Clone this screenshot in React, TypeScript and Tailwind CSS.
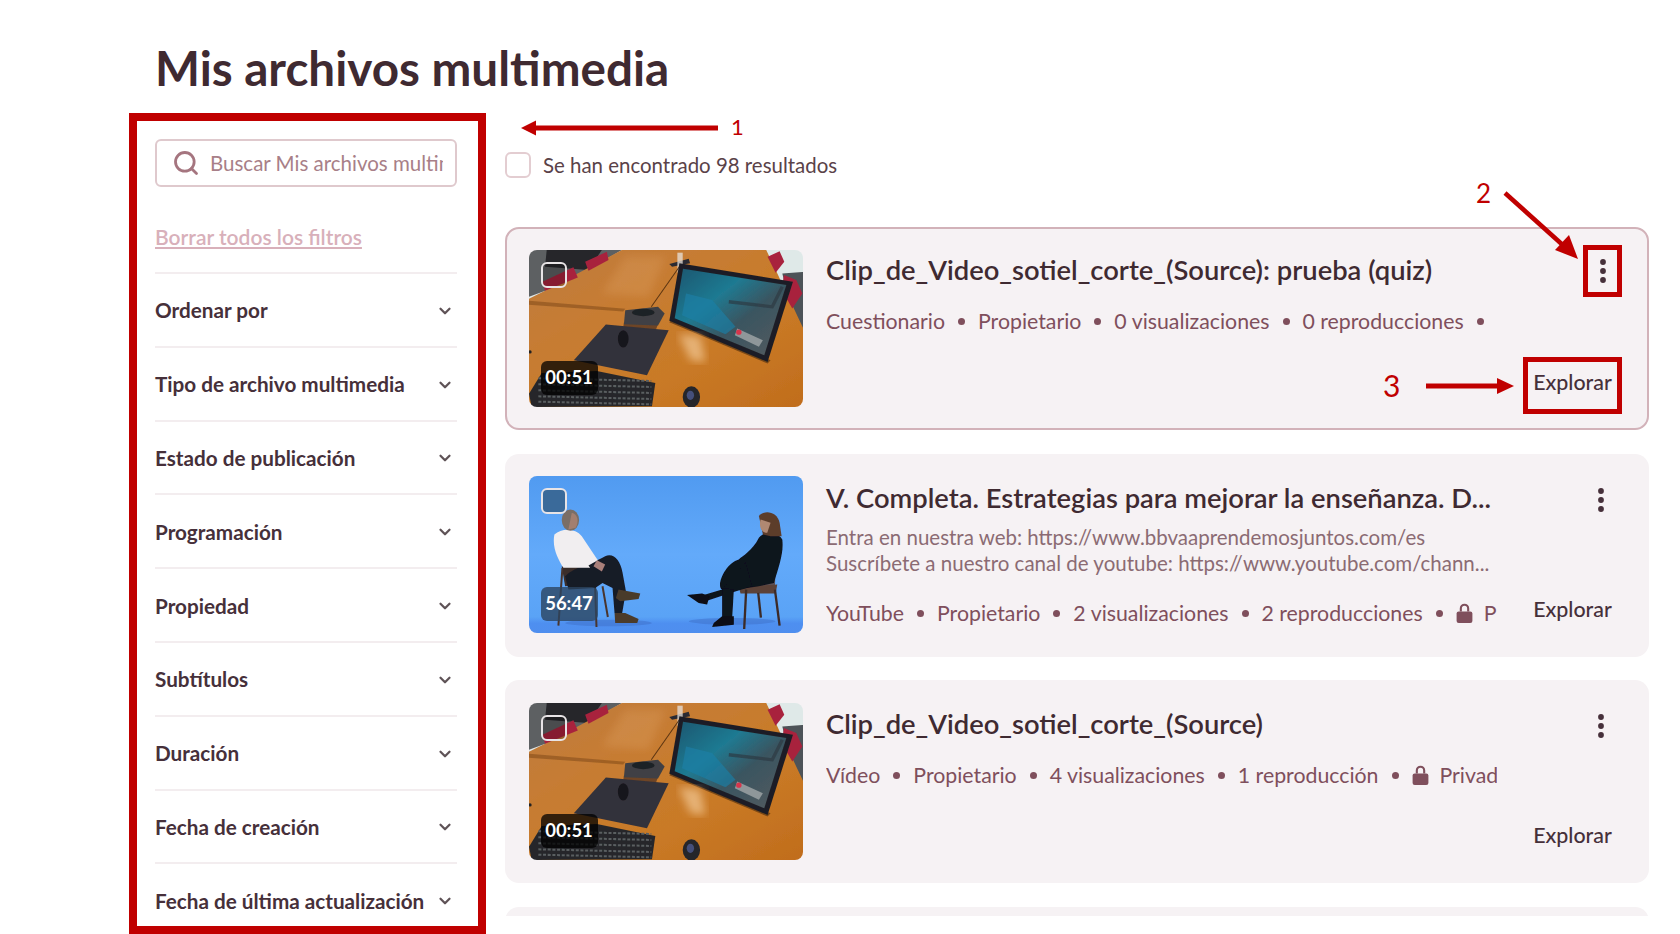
import { ChevronDown, Search } from 'lucide-react';

const filters = [
  'Ordenar por',
  'Tipo de archivo multimedia',
  'Estado de publicación',
  'Programación',
  'Propiedad',
  'Subtítulos',
  'Duración',
  'Fecha de creación',
  'Fecha de última actualización',
];

function OfficeScene() {
  return (
    <svg viewBox="12 10 820 470" preserveAspectRatio="none" className="h-full w-full">
      <defs>
        <linearGradient id="table" x1="0" y1="0" x2="1" y2="1">
          <stop offset="0" stopColor="#bd7a3e" />
          <stop offset="0.3" stopColor="#c67c34" />
          <stop offset="0.65" stopColor="#c97a26" />
          <stop offset="1" stopColor="#c06c1c" />
        </linearGradient>
        <linearGradient id="screen" x1="0" y1="0" x2="1" y2="1">
          <stop offset="0" stopColor="#1c566f" />
          <stop offset="0.35" stopColor="#1f7a92" />
          <stop offset="0.6" stopColor="#3a5560" />
          <stop offset="1" stopColor="#555b5f" />
        </linearGradient>
        <filter id="soft">
          <feGaussianBlur stdDeviation="2.2" />
        </filter>
        <filter id="glow">
          <feGaussianBlur stdDeviation="12" />
        </filter>
      </defs>
      <g filter="url(#soft)">
        <rect x="0" y="0" width="840" height="490" fill="#dfe6e4" />
        <polygon points="12,10 290,10 120,110 12,150" fill="#5d6062" />
        <polygon points="65,10 230,10 190,70 60,60" fill="#26262b" />
        <polygon points="700,10 840,10 840,250" fill="#dfe9e8" />
        <polygon points="770,80 840,75 840,260 800,200" fill="#4d5358" />
        <polygon points="290,10 722,10 840,260 840,490 0,490 0,162 60,132" fill="url(#table)" />
        <polygon points="12,162 300,186 294,194 12,174" fill="#7a4616" opacity="0.5" />
        <polygon points="300,30 420,30 370,150 230,140" fill="#e0a468" opacity="0.3" filter="url(#glow)" />
        <polygon points="180,45 245,15 250,40 190,72" fill="#a8233e" />
        <polygon points="52,105 145,62 158,92 60,132" fill="#a8233e" />
        <polygon points="726,30 762,14 776,45 750,78" fill="#a8233e" />
        <polygon points="775,85 812,100 830,140 800,185 768,130" fill="#a8233e" />
        <polygon points="432,52 490,36 494,50 440,60" fill="#2b2b30" />
        <rect x="456" y="18" width="16" height="60" fill="#e7e2dc" opacity="0.75" />
        <line x1="462" y1="60" x2="378" y2="180" stroke="#5a3413" strokeWidth="3" />
        <polygon points="432,226 726,350 735,340 440,218" fill="#5a3413" opacity="0.7" />
        <polygon points="462,50 802,105 726,345 432,222" fill="#1f1f25" />
        <polygon points="473,66 782,115 716,325 448,214" fill="url(#screen)" />
        <polygon points="482,140 560,160 630,240 600,262 470,205" fill="#1a7fa8" opacity="0.65" />
        <polyline points="610,165 740,180 770,120" fill="none" stroke="#2c3a44" strokeWidth="10" opacity="0.7" />
        <polygon points="635,245 712,280 700,300 628,265" fill="#8f979a" />
        <circle cx="640" cy="256" r="8" fill="#d8344c" />
        <polygon points="460,262 525,268 540,345 495,340" fill="#f0c48f" opacity="0.75" filter="url(#glow)" />
        <polygon points="296,228 398,232 392,248 294,242" fill="#6e4526" />
        <polygon points="300,190 398,180 418,200 398,236 296,232" fill="#404144" />
        <ellipse cx="354" cy="197" rx="34" ry="11" fill="#1f2126" />
        <polygon points="242,233 430,250 365,385 146,340" fill="#33313a" />
        <ellipse cx="294" cy="276" rx="16" ry="26" fill="#17171c" />
        <polygon points="50,378 215,372 390,408 380,478 20,480 12,440" fill="#26282b" />
        {[392, 410, 428, 446, 462].map((y) => (
          <line key={y} x1="40" y1={y + 2} x2="378" y2={y + 10} stroke="#5a5e61" strokeWidth="6" strokeDasharray="9 5" />
        ))}
        <ellipse cx="498" cy="450" rx="26" ry="32" fill="#25262c" />
        <ellipse cx="495" cy="445" rx="11" ry="14" fill="#45507a" />
        <circle cx="15" cy="315" r="5" fill="#222" />
      </g>
    </svg>
  );
}

function InterviewScene() {
  return (
    <svg viewBox="12 10 820 470" preserveAspectRatio="none" className="h-full w-full">
      <defs>
        <linearGradient id="wall" x1="0" y1="0" x2="0" y2="1">
          <stop offset="0" stopColor="#509af0" />
          <stop offset="0.5" stopColor="#63aafa" />
          <stop offset="0.88" stopColor="#5aa3f6" />
          <stop offset="0.92" stopColor="#4e8ff0" />
          <stop offset="1" stopColor="#4f8eee" />
        </linearGradient>
        <filter id="soft2">
          <feGaussianBlur stdDeviation="1.6" />
        </filter>
      </defs>
      <rect x="0" y="0" width="840" height="490" fill="url(#wall)" />
      <g filter="url(#soft2)">
        <ellipse cx="250" cy="450" rx="130" ry="10" fill="#3f74cf" opacity="0.6" />
        <ellipse cx="620" cy="445" rx="130" ry="10" fill="#3f74cf" opacity="0.6" />

        {/* man */}
        <path d="M110 280 L205 280 L215 300 L215 330 L120 340 Z" fill="#3a2d2a" />
        <path d="M112 285 L100 458 M208 290 L214 462 M232 340 L248 432" stroke="#4a362e" strokeWidth="6" fill="none" />
        <path d="M120 310 C150 280 210 270 240 250 C265 240 285 260 292 300 L302 355 L290 425 L268 420 L262 345 L232 330 L210 345 L130 350 Z" fill="#181a26" />
        <path d="M280 350 L345 362 L340 378 L285 385 L272 375 Z" fill="#4a3a2c" />
        <path d="M268 420 L300 420 L340 438 L336 450 L270 450 Z" fill="#4b3b2c" />
        <path d="M88 185 C110 165 150 165 170 190 L218 262 L190 278 L195 285 L115 285 C100 260 80 225 88 185 Z" fill="#f1eef0" />
        <path d="M215 262 L240 275 L230 296 L205 280 Z" fill="#a9807a" />
        <ellipse cx="136" cy="142" rx="26" ry="32" fill="#7a6e66" />
        <path d="M140 120 C158 125 162 145 152 165 L130 170 Z" fill="#a37f70" />

        {/* woman */}
        <path d="M640 342 L755 335 L750 362 L645 362 Z" fill="#5c4338" />
        <path d="M670 290 L750 282 L748 340 L668 345 Z" fill="#5c4338" opacity="0.85" />
        <path d="M662 350 L656 468 M748 350 L762 458 M698 360 L706 434" stroke="#3c2c28" strokeWidth="7" fill="none" />
        <path d="M640 260 C650 250 680 235 700 195 C715 175 750 170 770 200 C775 240 760 280 745 330 L700 340 L620 352 L590 350 C570 340 600 270 640 260 Z" fill="#10121c" />
        <path d="M660 270 L590 350 L530 368 L540 385 L610 362 L680 340 Z" fill="#10121c" />
        <path d="M590 345 L625 350 L620 435 L590 435 Z" fill="#10121c" />
        <path d="M485 366 L530 362 L552 370 L545 395 L520 390 Z" fill="#0b0b12" />
        <path d="M590 430 L625 430 L625 455 L560 462 L565 450 Z" fill="#0b0b12" />
        <path d="M700 130 C715 110 755 115 762 150 L768 190 L735 190 L712 185 Z" fill="#5c3c2c" />
        <path d="M705 140 C700 160 705 180 725 180 L735 150 Z" fill="#b08872" />
      </g>
    </svg>
  );
}

function LockIcon() {
  return (
    <svg viewBox="0 0 16 19" className="h-[20px] w-[17px] shrink-0" fill="#7f4f5c">
      <path d="M3.5 8V5.2a4.5 4.5 0 0 1 9 0V8h-2V5.2a2.5 2.5 0 0 0-5 0V8z" />
      <rect x="0.5" y="8" width="15" height="11" rx="2" />
    </svg>
  );
}

function MoreDots() {
  return (
    <svg viewBox="0 0 6 24" className="h-[24px] w-[6px]" fill="#46303a">
      <circle cx="3" cy="3" r="2.9" />
      <circle cx="3" cy="12" r="2.9" />
      <circle cx="3" cy="21" r="2.9" />
    </svg>
  );
}

type MediaCardProps = {
  title: string;
  duration: string;
  scene: 'office' | 'interview';
  description?: string[];
  meta: string[];
  lockLabel?: string;
  highlighted?: boolean;
};

function MediaCard({ title, duration, scene, description, meta, lockLabel, highlighted }: MediaCardProps) {
  return (
    <article
      className={`flex h-[203px] shrink-0 rounded-[14px] border-2 bg-[#f6f2f4] pl-[21.5px] pr-[25px] ${
        highlighted ? 'border-[#d2b2b9]' : 'border-transparent'
      }`}
    >
      <div className="relative mt-[20.5px] h-[157px] w-[274px] shrink-0 overflow-hidden rounded-[8px]">
        {scene === 'office' ? <OfficeScene /> : <InterviewScene />}
        <span className={`absolute left-[12px] top-[12px] h-[26px] w-[26px] rounded-[6px] border-2 border-[#e8e4e6] ${scene === 'office' ? 'bg-black/20' : 'bg-[#3a6a9a]'}`} />
        <span className={`absolute bottom-[12px] left-[12px] flex h-[34px] w-[57px] items-center justify-center rounded-[6px] text-[18.5px] font-bold text-white ${scene === 'office' ? 'bg-black/75' : 'bg-[#2c4560]/80'}`}>
          {duration}
        </span>
      </div>
      <div className="ml-[23.5px] flex min-w-0 flex-1 flex-col pr-[26px]">
        <h2 className={`whitespace-nowrap text-[27.35px] font-semibold leading-[36px] text-[#3f2a31] ${highlighted ? 'mt-[23px]' : 'mt-[24px]'}`}>{title}</h2>
        {description ? (
          <div className="mt-[8px] text-[20.5px] leading-[26px] text-[#8b6b73]">
            {description.map((line) => (
              <p key={line} className="whitespace-nowrap">{line}</p>
            ))}
          </div>
        ) : null}
        <div className={`flex items-center gap-[13px] overflow-hidden whitespace-nowrap text-[21.3px] leading-[28px] text-[#7f4f5c] ${description ? 'mt-[23.5px]' : 'mt-[19px]'}`}>
          {meta.map((item) => (
            <span key={item} className="contents">
              <span className="shrink-0">{item}</span>
              <span className="h-[7px] w-[7px] shrink-0 rounded-full bg-[#7f4f5c]" />
            </span>
          ))}
          {lockLabel ? (
            <span className="flex shrink-0 items-center gap-[11px]">
              <LockIcon />
              {lockLabel}
            </span>
          ) : null}
        </div>
      </div>
      <div className="flex w-[99px] shrink-0 flex-col items-end justify-between pb-[14px] pt-[16px]">
        <button
          className={`flex h-[52px] w-[39px] items-center justify-center ${
            highlighted ? 'border-[5px] border-[#c00000]' : 'mr-[2px] mt-[2px]'
          }`}
        >
          <MoreDots />
        </button>
        <button
          className={`flex h-[57px] w-[99px] items-center justify-center pb-[6px] text-[21.4px] font-medium text-[#46303a] ${
            highlighted ? 'border-[5px] border-[#c00000]' : ''
          }`}
        >
          Explorar
        </button>
      </div>
    </article>
  );
}

export default function App() {
  return (
    <div className="relative h-[934px] w-[1680px] overflow-hidden bg-white pl-[129px] font-['Lato',sans-serif]">
      <h1 className="flex h-[113px] items-center pl-[26px] pt-[22px] text-[47.6px] font-bold leading-none text-[#3f2a31]">
        Mis archivos multimedia
      </h1>
      <div className="flex items-start gap-[19px]">
        <aside className="h-[821px] w-[357px] shrink-0 overflow-hidden border-[8px] border-[#c00000] pl-[18px] pr-[21px] pt-[18px]">
          <div className="flex h-[48px] items-center gap-[10px] overflow-hidden rounded-[6px] border-2 border-[#dfc9cd] pl-[15px] pr-[12px]">
            <Search className="h-[28px] w-[28px] shrink-0 text-[#a5757f]" strokeWidth={2.4} />
            <span className="overflow-hidden whitespace-nowrap text-[20.5px] text-[#a87f88]">Buscar Mis archivos multimedia</span>
          </div>
          <a className="mt-[36px] block text-[21px] font-semibold leading-[28px] text-[#d8b0ba] underline">Borrar todos los filtros</a>
          <div className="mt-[21px]">
            {filters.map((label) => (
              <div key={label} className="flex h-[73.8px] items-center justify-between border-t-2 border-[#f3edef] pr-[3px] pt-[2px] text-[20.7px] font-bold text-[#46303a]">
                <span className="whitespace-nowrap">{label}</span>
                <ChevronDown className="h-[18px] w-[18px] shrink-0 text-[#5f5357]" strokeWidth={3} />
              </div>
            ))}
          </div>
        </aside>
        <main className="h-[803px] w-[1144px] overflow-hidden">
          <div className="flex h-[114px] items-start pt-[38px]">
            <span className="mt-[1px] h-[26px] w-[26px] shrink-0 rounded-[6px] border-2 border-[#e3cdd1] bg-white" />
            <span className="ml-[12px] text-[20.45px] leading-[28px] text-[#5a4248]">Se han encontrado 98 resultados</span>
          </div>
          <div className="flex flex-col gap-[23.5px]">
            <MediaCard
              highlighted
              scene="office"
              duration="00:51"
              title="Clip_de_Video_sotiel_corte_(Source): prueba (quiz)"
              meta={['Cuestionario', 'Propietario', '0 visualizaciones', '0 reproducciones']}
            />
            <MediaCard
              scene="interview"
              duration="56:47"
              title="V. Completa. Estrategias para mejorar la enseñanza. D..."
              description={[
                'Entra en nuestra web: https://www.bbvaaprendemosjuntos.com/es',
                'Suscríbete a nuestro canal de youtube: https://www.youtube.com/chann...',
              ]}
              meta={['YouTube', 'Propietario', '2 visualizaciones', '2 reproducciones']}
              lockLabel="Privado"
            />
            <MediaCard
              scene="office"
              duration="00:51"
              title="Clip_de_Video_sotiel_corte_(Source)"
              meta={['Vídeo', 'Propietario', '4 visualizaciones', '1 reproducción']}
              lockLabel="Privado"
            />
            <div className="h-[203px] shrink-0 rounded-[14px] bg-[#f6f2f4]" />
          </div>
        </main>
      </div>

      {/* annotation arrows drawn over the page */}
      <svg className="pointer-events-none absolute left-0 top-0 h-[934px] w-[1680px]" viewBox="0 0 1680 934" fill="#c00000">
        <rect x="533" y="125.5" width="185" height="5" />
        <polygon points="521,128 536,120.5 536,135.5" />
        <line x1="1505" y1="193" x2="1565" y2="247" stroke="#c00000" strokeWidth="4.5" />
        <polygon points="1578,259 1555,250 1569,235" />
        <rect x="1426" y="383.5" width="74" height="5" />
        <polygon points="1514,386 1497,378 1497,394" />
      </svg>
      <span className="absolute left-[731px] top-[113px] text-[22px] leading-[28px] text-[#c00000]">1</span>
      <span className="absolute left-[1476px] top-[177px] text-[26px] leading-[32px] text-[#c00000]">2</span>
      <span className="absolute left-[1383px] top-[367px] text-[30px] leading-[36px] text-[#c00000]">3</span>
    </div>
  );
}
